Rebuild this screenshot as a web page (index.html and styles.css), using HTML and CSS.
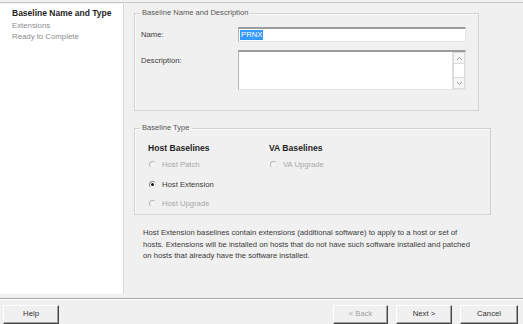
FILE: index.html
```html
<!DOCTYPE html>
<html>
<head>
<meta charset="utf-8">
<link rel="stylesheet" href="styles.css">
</head>
<body>
<div class="window">
  <div class="main">
    <nav class="nav">
      <div class="nav-item active">Baseline Name and Type</div>
      <div class="nav-item">Extensions</div>
      <div class="nav-item">Ready to Complete</div>
    </nav>
    <section class="content">
      <fieldset class="group group-name">
        <legend>Baseline Name and Description</legend>
        <div class="form-grid">
          <div class="label label-name">Name:</div>
          <div class="textbox"><span class="sel">PRNX</span></div>
          <div class="label label-desc">Description:</div>
          <div class="textarea">
            <div class="scroll">
              <div class="sb-btn sb-up"><svg width="7" height="5" viewBox="0 0 7 5"><path d="M1 4 L3.5 1.5 L6 4" fill="none" stroke="#9a9a9a" stroke-width="1"/></svg></div>
              <div class="sb-track"></div>
              <div class="sb-btn sb-down"><svg width="7" height="5" viewBox="0 0 7 5"><path d="M1 1 L3.5 3.5 L6 1" fill="none" stroke="#9a9a9a" stroke-width="1"/></svg></div>
            </div>
          </div>
        </div>
      </fieldset>
      <fieldset class="group group-type">
        <legend>Baseline Type</legend>
        <div class="type-cols">
          <div class="type-col host-col">
            <div class="col-title">Host Baselines</div>
            <div class="radio disabled"><span class="dot"></span>Host Patch</div>
            <div class="radio checked"><span class="dot"></span>Host Extension</div>
            <div class="radio disabled"><span class="dot"></span>Host Upgrade</div>
          </div>
          <div class="type-col">
            <div class="col-title">VA Baselines</div>
            <div class="radio disabled"><span class="dot"></span>VA Upgrade</div>
          </div>
        </div>
      </fieldset>
      <p class="help-text">Host Extension baselines contain extensions (additional software) to apply to a host or set of hosts. Extensions will be installed on hosts that do not have such software installed and patched on hosts that already have the software installed.</p>
    </section>
  </div>
  <footer class="footer">
    <button class="btn btn-help">Help</button>
    <div class="spacer"></div>
    <button class="btn btn-back" disabled>&lt; Back</button>
    <button class="btn btn-next">Next &gt;</button>
    <button class="btn btn-cancel">Cancel</button>
  </footer>
</div>
</body>
</html>
```

FILE: styles.css
```css
html, body {
  margin: 0;
  padding: 0;
}
body {
  width: 523px;
  height: 324px;
  overflow: hidden;
  background: #f0f0f0;
  font-family: "Liberation Sans", Arial, sans-serif;
  font-size: 7.7px;
  color: #3a3a3a;
}
.window {
  display: flex;
  flex-direction: column;
  height: 324px;
  padding-top: 2px;
  box-sizing: border-box;
}
.main {
  display: flex;
  height: 295px;
  border-top: 1px solid #c6c6c6;
}
.nav {
  width: 124px;
  flex: none;
  background: #fff;
  border-right: 1px solid #d8d8d8;
  padding: 4px 0 0 12px;
  box-sizing: border-box;
  margin-top: 1px;
}
.nav-item {
  line-height: 11.5px;
  color: #8c8c8c;
  font-size: 7.8px;
}
.nav-item.active {
  font-weight: bold;
  color: #1e1e1e;
  font-size: 8.5px;
}
.content {
  flex: 1;
  padding: 5px 0 0 10px;
}
.group {
  margin: 0;
  padding: 0;
  border: 1px solid #d2d2d2;
  box-shadow: inset 1px 1px 0 #fafafa;
  min-inline-size: 0;
}
.group legend {
  padding: 0 2px;
  margin-left: 5px;
  line-height: 10px;
  font-size: 7.6px;
  color: #555;
}
.group-name {
  width: 345px;
  box-sizing: border-box;
  height: 103px;
}
.form-grid {
  display: grid;
  grid-template-columns: 97px 228px;
  row-gap: 8px;
  padding: 9px 0 0 6px;
}
.label {
  color: #3a3a3a;
}
.label-name {
  align-self: center;
}
.label-desc {
  padding-top: 6px;
}
.textbox {
  height: 15px;
  box-sizing: border-box;
  background: #fff;
  border-top: 2px solid #9c9c9c;
  border-left: 1px solid #b4b4b4;
  border-right: 1px solid #e6e6e6;
  border-bottom: 1px solid #e6e6e6;
  display: flex;
  align-items: center;
  padding-left: 1px;
}
.sel {
  background: #3399ff;
  color: #fff;
  line-height: 10px;
  padding: 0 1px;
}
.textarea {
  height: 40px;
  box-sizing: border-box;
  background: #fff;
  border-top: 2px solid #9c9c9c;
  border-left: 1px solid #b4b4b4;
  border-right: 1px solid #e6e6e6;
  border-bottom: 1px solid #e6e6e6;
  display: flex;
  justify-content: flex-end;
}
.scroll {
  width: 12px;
  display: flex;
  flex-direction: column;
  background: #f4f4f4;
  border-left: 1px solid #e0e0e0;
}
.sb-btn {
  height: 12px;
  display: flex;
  align-items: center;
  justify-content: center;
  border: 1px solid #dcdcdc;
  box-sizing: border-box;
  background: #f6f6f6;
}
.sb-track {
  flex: 1;
  background: #fff;
  border-left: 1px solid #dcdcdc;
  border-right: 1px solid #dcdcdc;
}
.group-type {
  margin-top: 12px;
  width: 357px;
  box-sizing: border-box;
  height: 92px;
}
.type-cols {
  display: flex;
  padding: 9px 0 0 13px;
}
.type-col {
  display: flex;
  flex-direction: column;
}
.host-col {
  width: 121px;
}
.col-title {
  font-weight: bold;
  font-size: 8.6px;
  line-height: 12px;
  color: #1e1e1e;
  margin-bottom: 1px;
}
.radio {
  display: flex;
  align-items: center;
  height: 19.5px;
  color: #3a3a3a;
}
.radio.disabled {
  color: #a8a8a8;
}
.dot {
  width: 7px;
  height: 7px;
  margin: 0 6px 0 1px;
  border-radius: 50%;
  box-sizing: border-box;
  border: 1px solid;
  border-color: #8a8a8a #e8e8e8 #e8e8e8 #8a8a8a;
  background: #fff;
  display: flex;
  align-items: center;
  justify-content: center;
}
.radio.disabled .dot {
  border-color: #b8b8b8 #ececec #ececec #b8b8b8;
  background: #f4f4f4;
}
.radio.checked .dot::after {
  content: "";
  width: 3px;
  height: 3px;
  border-radius: 50%;
  background: #111;
}
.help-text {
  margin: 12px 0 0 9px;
  width: 333px;
  line-height: 11.5px;
  color: #3a3a3a;
}
.footer {
  display: flex;
  margin-top: 4px;
  border-top: 1px solid #a8a8a8;
  padding: 6px 5px 0 3px;
  box-shadow: inset 0 1px 0 #fff;
  align-items: flex-start;
}
.spacer {
  flex: 1;
}
.btn {
  height: 19px;
  width: 56px;
  font-family: "Liberation Sans", Arial, sans-serif;
  font-size: 7.7px;
  color: #333;
  background: #f0f0f0;
  border: 1px solid;
  border-color: #ffffff #454545 #454545 #ffffff;
  box-shadow: inset -1px -1px 0 #a0a0a0;
  padding: 0 0 3px 0;
  margin: 0;
}
.btn-back {
  color: #a0a0a0;
  width: 55px;
}
.btn-next {
  margin-left: 8px;
}
.btn-cancel {
  margin-left: 8px;
  width: 58px;
}
```
